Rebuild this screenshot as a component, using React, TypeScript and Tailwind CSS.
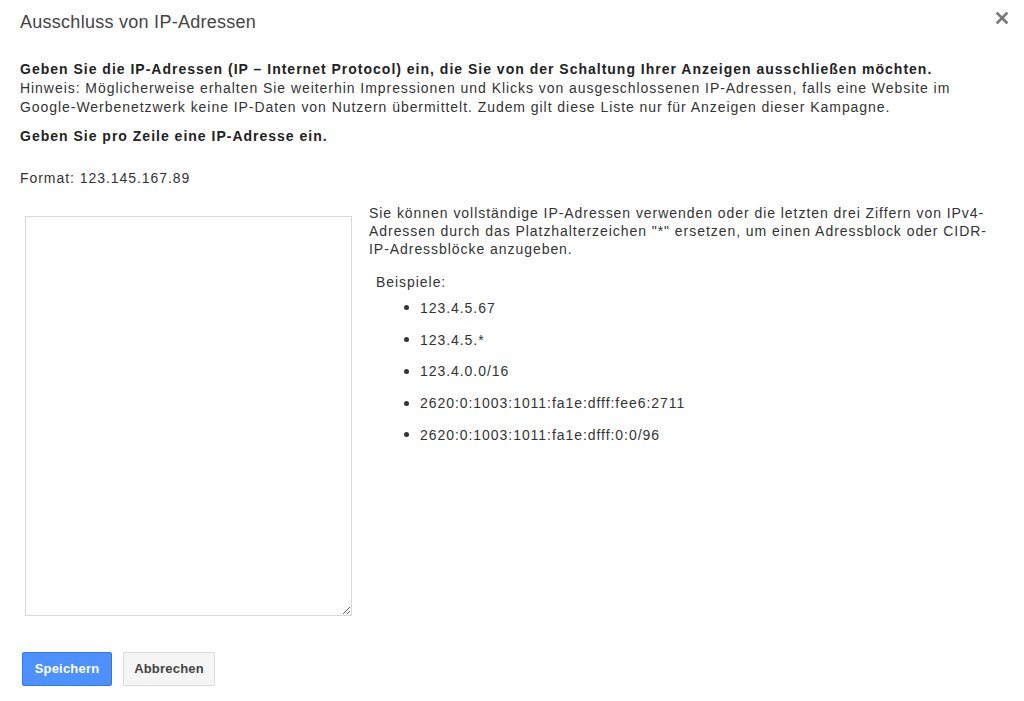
import React from "react";

export default function App() {
  const examples = [
    "123.4.5.67",
    "123.4.5.*",
    "123.4.0.0/16",
    "2620:0:1003:1011:fa1e:dfff:fee6:2711",
    "2620:0:1003:1011:fa1e:dfff:0:0/96",
  ];
  return (
    <div
      className="relative w-[1024px] h-[701px] bg-white text-[#333] overflow-hidden"
      style={{ fontFamily: '"Liberation Sans", Arial, sans-serif' }}
    >
      <button className="absolute left-[996px] top-[12px] w-[12px] h-[12px] flex items-center justify-center">
        <svg width="12" height="12" viewBox="0 0 12 12">
          <path d="M1.5 1.5 L10.5 10.5 M10.5 1.5 L1.5 10.5" stroke="#777" strokeWidth="2.6" strokeLinecap="square" />
        </svg>
      </button>
      <div className="pl-[20px] pr-[20px]">
        <h1 className="pt-[10px] text-[18px] leading-[24px] tracking-[0.27px] text-[#444] font-normal">
          Ausschluss von IP-Adressen
        </h1>
        <p className="mt-[26px] text-[14px] leading-[19px] tracking-[1px] font-bold text-[#222]">
          Geben Sie die IP-Adressen (IP – Internet Protocol) ein, die Sie von der Schaltung Ihrer Anzeigen ausschließen möchten.
        </p>
        <p className="text-[14px] leading-[19px] tracking-[0.95px] text-[#333] pr-[40px]">
          Hinweis: Möglicherweise erhalten Sie weiterhin Impressionen und Klicks von ausgeschlossenen IP-Adressen, falls eine Website im Google-Werbenetzwerk keine IP-Daten von Nutzern übermittelt. Zudem gilt diese Liste nur für Anzeigen dieser Kampagne.
        </p>
        <p className="mt-[10px] text-[14px] leading-[19px] tracking-[1px] font-bold text-[#222]">
          Geben Sie pro Zeile eine IP-Adresse ein.
        </p>
        <p className="mt-[23px] text-[14px] leading-[19px] tracking-[0.95px] text-[#333]">
          Format: 123.145.167.89
        </p>
        <div className="mt-[16px] flex">
          <textarea className="ml-[5px] mt-[12px] w-[327px] h-[400px] border border-[#d9d9d9] outline-none shrink-0 resize" />
          <div className="ml-[17px] w-[630px] text-[14px] leading-[18px] tracking-[0.95px] text-[#333]">
            <p>
              Sie können vollständige IP-Adressen verwenden oder die letzten drei Ziffern von IPv4-Adressen durch das Platzhalterzeichen "*" ersetzen, um einen Adressblock oder CIDR-IP-Adressblöcke anzugeben.
            </p>
            <p className="mt-[15px] ml-[7px]">Beispiele:</p>
            <ul className="mt-[1px] ml-[30px]">
              {examples.map((e) => (
                <li key={e} className="flex items-center h-[31.75px]">
                  <span className="w-[5px] h-[5px] rounded-full bg-[#333] mr-[11px] ml-[5px]" />
                  {e}
                </li>
              ))}
            </ul>
          </div>
        </div>
        <div className="mt-[36px] flex gap-[11px]">
          <button className="ml-[2px] w-[90px] h-[34px] rounded-[2px] bg-[#4d90fe] border border-[#3079ed] text-white text-[13px] tracking-[0.2px] font-bold">
            Speichern
          </button>
          <button className="w-[92px] h-[34px] rounded-[2px] bg-[#f5f5f5] border border-[#dcdcdc] text-[#444] text-[13px] tracking-[0.2px] font-bold">
            Abbrechen
          </button>
        </div>
      </div>
    </div>
  );
}
